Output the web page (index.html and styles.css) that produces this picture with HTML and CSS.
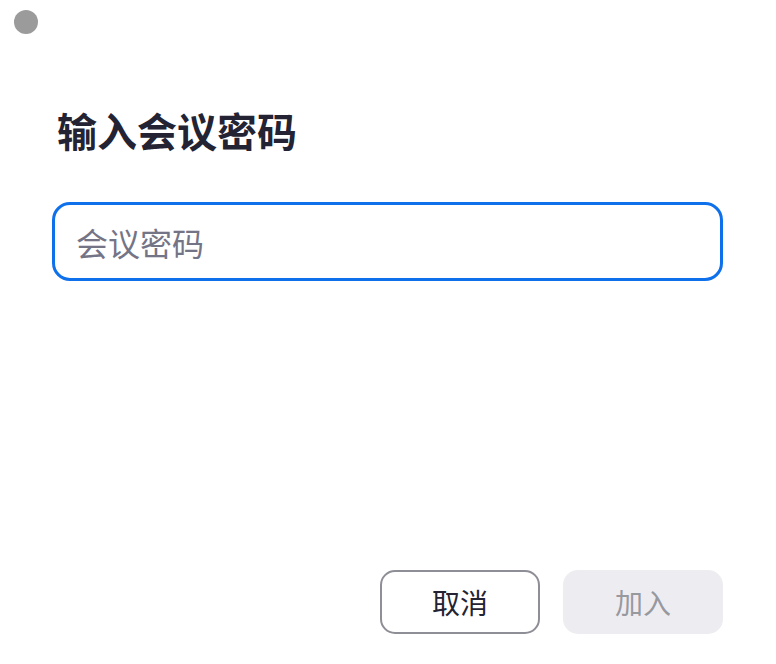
FILE: index.html
```html
<!DOCTYPE html>
<html lang="zh-CN">
<head>
<meta charset="utf-8">
<link rel="stylesheet" href="styles.css">
</head>
<body>
<div class="window">
  <div class="titlebar"><span class="dot"></span></div>
  <div class="content">
    <h1 class="title">输入会议密码</h1>
    <input class="field" type="text" placeholder="会议密码">
  </div>
  <div class="actions">
    <button class="btn btn-cancel">取消</button>
    <button class="btn btn-join">加入</button>
  </div>
</div>
</body>
</html>
```
FILE: styles.css
```css
html, body {
  margin: 0;
  padding: 0;
  background: #ffffff;
}
body {
  font-family: "Noto Sans CJK SC", "Noto Sans", sans-serif;
}
.window {
  width: 776px;
  height: 664px;
  display: flex;
  flex-direction: column;
  box-sizing: border-box;
}
.titlebar {
  padding: 10px 14px 0;
  height: 24px;
}
.dot {
  display: block;
  width: 24px;
  height: 24px;
  border-radius: 50%;
  background: #9b9b9b;
}
.content {
  padding: 0 53px 0 52px;
}
.title {
  margin: 72px 0 0 5px;
  font-size: 40px;
  line-height: 48px;
  font-weight: 700;
  color: #232333;
}
.field {
  display: block;
  box-sizing: border-box;
  width: 100%;
  height: 79px;
  margin-top: 48px;
  border: 3px solid #0e71eb;
  border-radius: 18px;
  padding: 0 0 0 21px;
  font-family: inherit;
  font-size: 32px;
  color: #232333;
  outline: none;
}
.field::placeholder {
  color: #747487;
}
.actions {
  margin-top: auto;
  display: flex;
  justify-content: flex-end;
  gap: 23px;
  padding: 0 53px 30px 0;
}
.btn {
  width: 160px;
  height: 64px;
  border-radius: 15px;
  font-family: inherit;
  font-size: 28px;
  padding: 0;
}
.btn-cancel {
  background: #ffffff;
  border: 2px solid #8e8e96;
  color: #232333;
}
.btn-join {
  background: #ededf1;
  border: none;
  color: #98989f;
}
```
